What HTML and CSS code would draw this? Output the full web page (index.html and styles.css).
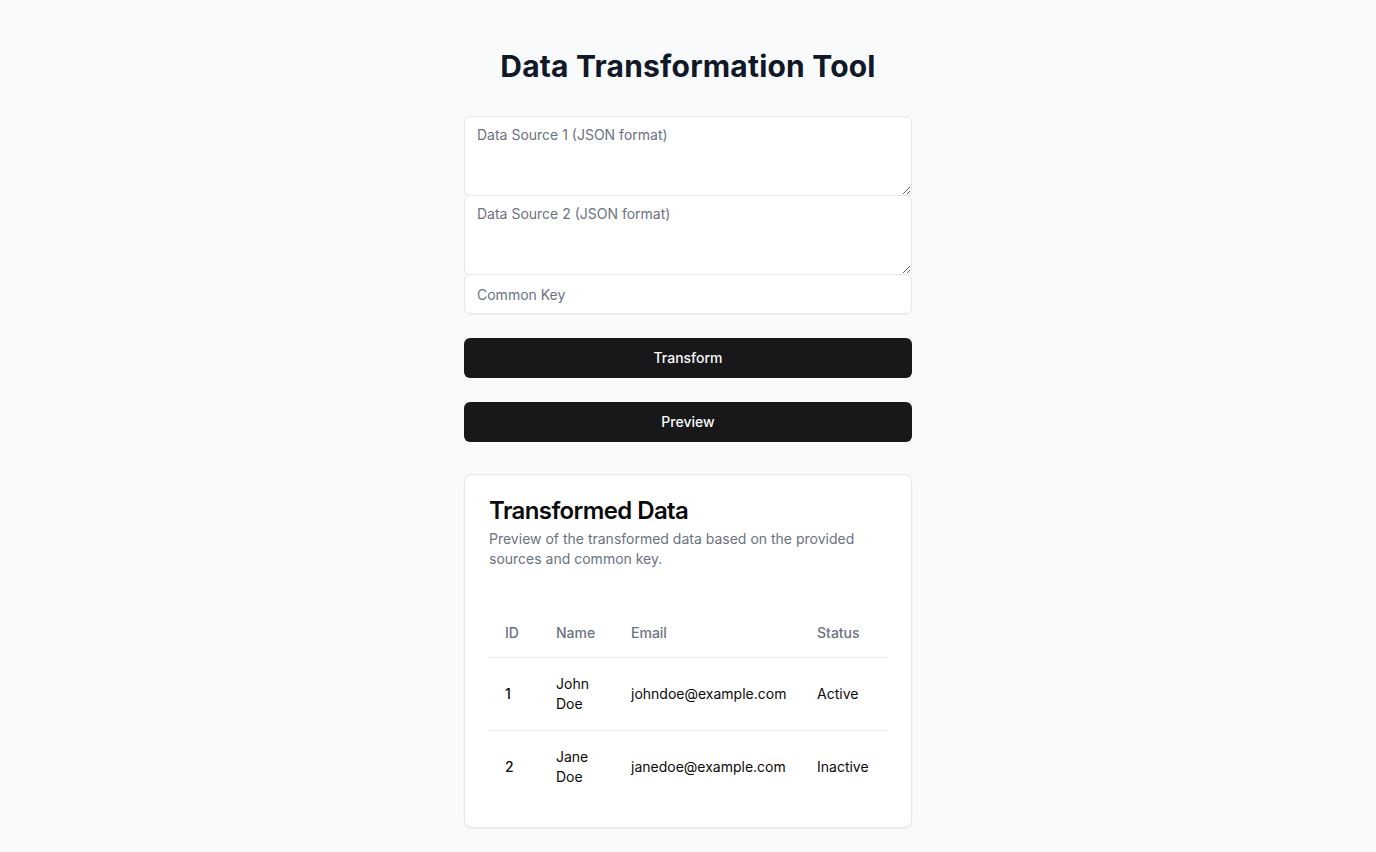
FILE: index.html
```html
<!DOCTYPE html>
<html lang="en">
<head>
<meta charset="utf-8">
<title>Data Transformation Tool</title>
<link rel="stylesheet" href="styles.css">
</head>
<body>
<main class="page">
  <h1 class="page-title">Data Transformation Tool</h1>
  <div class="fields">
    <textarea class="field textarea" placeholder="Data Source 1 (JSON format)"></textarea>
    <textarea class="field textarea" placeholder="Data Source 2 (JSON format)"></textarea>
    <input class="field input" type="text" placeholder="Common Key">
  </div>
  <button class="btn btn-transform">Transform</button>
  <button class="btn btn-preview">Preview</button>
  <section class="card">
    <div class="card-header">
      <h2 class="card-title">Transformed Data</h2>
      <p class="card-desc">Preview of the transformed data based on the provided sources and common key.</p>
    </div>
    <div class="card-content">
      <table class="table">
        <thead>
          <tr><th class="col-id">ID</th><th class="col-name">Name</th><th class="col-email">Email</th><th class="col-status">Status</th></tr>
        </thead>
        <tbody>
          <tr><td class="id">1</td><td>John Doe</td><td>johndoe@example.com</td><td>Active</td></tr>
          <tr><td class="id">2</td><td>Jane Doe</td><td>janedoe@example.com</td><td>Inactive</td></tr>
        </tbody>
      </table>
    </div>
  </section>
</main>
</body>
</html>
```
FILE: styles.css
```css
* { box-sizing: border-box; }
html, body { margin: 0; padding: 0; }
body {
  background: #f9fafb;
  font-family: Inter, "Noto Sans", sans-serif;
  color: #0a0a0a;
}
.page {
  width: 448px;
  margin: 0 auto;
  padding: 48px 0 24px;
  display: flex;
  flex-direction: column;
}
.page-title {
  margin: 0 0 32px;
  font-size: 30px;
  line-height: 36px;
  font-weight: 700;
  letter-spacing: 0.2px;
  text-align: center;
  color: #111827;
}
.fields { display: flex; flex-direction: column; }
.field {
  display: block;
  width: 100%;
  border: 1px solid #e5e7eb;
  border-radius: 6px;
  background: #fff;
  padding: 8px 12px;
  font-family: Inter, "Noto Sans", sans-serif;
  font-size: 14px;
  line-height: 20px;
  color: #0a0a0a;
  margin: 0;
  box-shadow: 0 1px 2px rgba(0,0,0,0.04);
}
.field::placeholder { color: #6b7280; }
.textarea { height: 80px; min-height: 80px; resize: vertical; }
.textarea + .textarea { margin-top: -1px; }
.input { height: 40px; margin-top: -1px; }
.btn {
  height: 40px;
  width: 100%;
  border: none;
  border-radius: 6px;
  background: #18181b;
  color: #fafafa;
  font-family: Inter, "Noto Sans", sans-serif;
  font-size: 14px;
  font-weight: 500;
  line-height: 20px;
  padding: 0 16px 1px;
  cursor: pointer;
}
.btn-transform { margin-top: 24px; }
.btn-preview { margin-top: 24px; }
.card {
  margin-top: 32px;
  background: #fff;
  border: 1px solid #e5e7eb;
  border-radius: 8px;
  box-shadow: 0 1px 2px rgba(0,0,0,0.05);
}
.card-header { padding: 24px 24px 0; }
.card-title {
  margin: 0;
  font-size: 24px;
  line-height: 24px;
  font-weight: 600;
  letter-spacing: -0.6px;
}
.card-desc {
  margin: 6px 0 0;
  font-size: 14px;
  line-height: 20px;
  color: #6b7280;
}
.card-content { padding: 40px 24px 24px; }
.table {
  width: 100%;
  table-layout: fixed;
  border-collapse: collapse;
  font-size: 14px;
  line-height: 20px;
}
.col-id { width: 51px; }
.col-name { width: 75px; }
.col-email { width: 186px; }
.col-status { width: 86px; }
.table th {
  height: 48px;
  padding: 0 16px;
  text-align: left;
  font-weight: 500;
  color: #6b7280;
  border-bottom: 1px solid #e5e7eb;
}
.table td {
  padding: 16px;
  vertical-align: middle;
  border-bottom: 1px solid #e5e7eb;
  overflow-wrap: normal;
}
.table tbody tr:last-child td { border-bottom: none; }
.table td.id { font-weight: 500; }
```
